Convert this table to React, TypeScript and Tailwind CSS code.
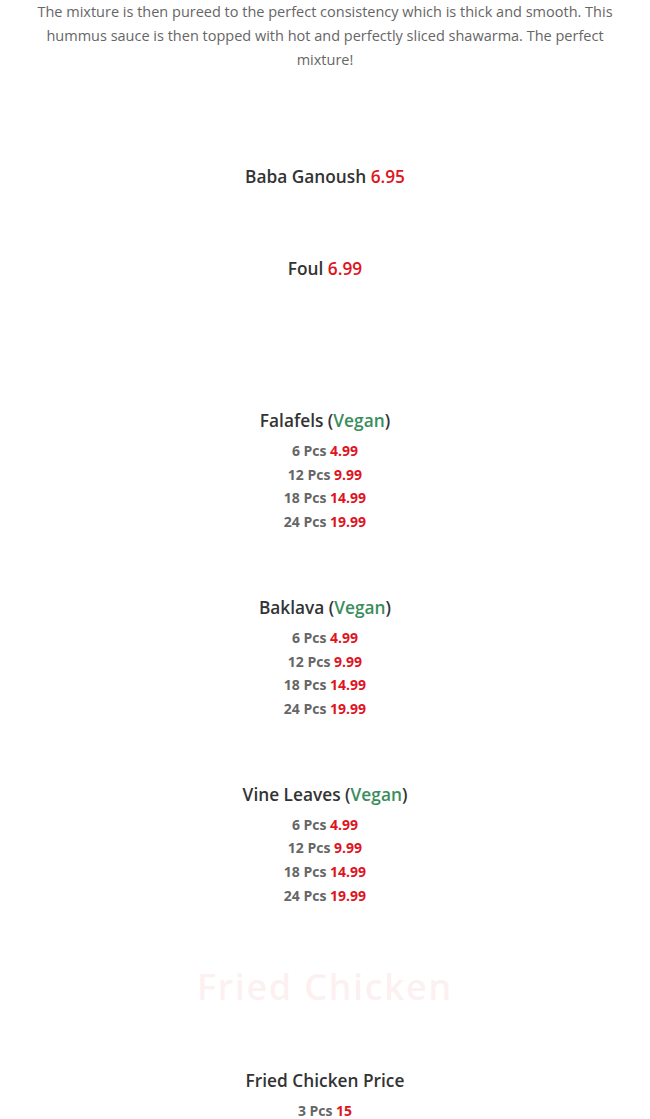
import React from "react"

type Item = { qty: string; price: string }

const packs: Item[] = [
  { qty: "6 Pcs", price: "4.99" },
  { qty: "12 Pcs", price: "9.99" },
  { qty: "18 Pcs", price: "14.99" },
  { qty: "24 Pcs", price: "19.99" },
]

function Heading({ children }: { children: React.ReactNode }) {
  return <h3 className="text-[17.3px] font-semibold leading-[22px] text-[#333333]">{children}</h3>
}

function Price({ value }: { value: string }) {
  return <span className="text-[#e0141e]">{value}</span>
}

function Vegan() {
  return (
    <>
      {" "}(<span className="text-[#3a8d5c]">Vegan</span>)
    </>
  )
}

function PackList({ items }: { items: Item[] }) {
  return (
    <div className="mt-[7px] text-[14px] font-bold leading-[23.7px] text-[#666666]">
      {items.map((item) => (
        <p key={item.qty}>
          {item.qty} <Price value={item.price} />
        </p>
      ))}
    </div>
  )
}

export default function App() {
  return (
    <div className="min-h-screen bg-white text-center font-['Open_Sans',sans-serif]">
      <div className="mx-auto w-[590px]">
        <p className="text-[14.5px] leading-[24px] text-[#666666]">
          The mixture is then pureed to the perfect consistency which is thick and smooth. This hummus sauce is then
          topped with hot and perfectly sliced shawarma. The perfect mixture!
        </p>

        <div className="mt-[94px]">
          <Heading>
            Baba Ganoush <Price value="6.95" />
          </Heading>
        </div>

        <div className="mt-[70px]">
          <Heading>
            Foul <Price value="6.99" />
          </Heading>
        </div>

        <div className="mt-[130px]">
          <Heading>
            Falafels<Vegan />
          </Heading>
          <PackList items={packs} />
        </div>

        <div className="mt-[63px]">
          <Heading>
            Baklava<Vegan />
          </Heading>
          <PackList items={packs} />
        </div>

        <div className="mt-[63px]">
          <Heading>
            Vine Leaves<Vegan />
          </Heading>
          <PackList items={packs} />
        </div>

        <h2 className="mt-[58px] font-['Noto_Sans',sans-serif] text-[36px] font-medium leading-[44px] tracking-[1.8px] text-[#fcf0f1]">
          Fried Chicken
        </h2>

        <div className="mt-[61px]">
          <Heading>Fried Chicken Price</Heading>
          <PackList items={[{ qty: "3 Pcs", price: "15" }]} />
        </div>
      </div>
    </div>
  )
}
